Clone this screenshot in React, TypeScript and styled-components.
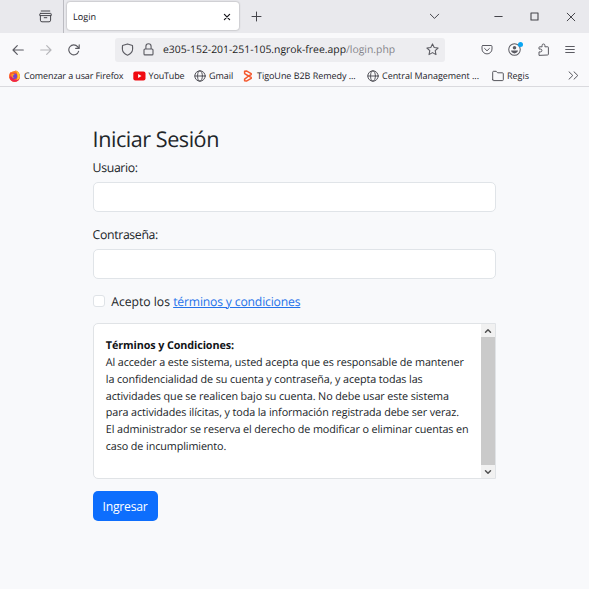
import React from 'react';
import styled, { createGlobalStyle } from 'styled-components';

const Global = createGlobalStyle`
  *, *::before, *::after { box-sizing: border-box; }
  html, body { margin: 0; height: 100%; overflow: hidden; background: #f8f9fb; }
  body {
    font-family: "Open Sans", "Noto Sans", sans-serif;
    color: #212529;
    text-rendering: geometricPrecision;
  }
  svg { display: block; flex: none; }
`;

const Window = styled.div`
  width: 589px;
  height: 589px;
  display: flex;
  flex-direction: column;
  overflow: hidden;
`;

const TabStrip = styled.header`
  display: flex;
  height: 33px;
  flex: none;
  background: #e9e9ed;
  color: #45454b;
`;

const ViewButton = styled.div`
  display: flex;
  justify-content: flex-end;
  width: 64px;
  padding: 10px 11px 0 0;
  border-right: 1px solid #bcbcc2;
`;

const Tab = styled.div`
  display: flex;
  align-items: center;
  justify-content: space-between;
  width: 172px;
  height: 28px;
  margin: 2px 0 0 3px;
  padding: 1px 8px 0 6px;
  border-radius: 3px;
  background: #fff;
  box-shadow: 0 0 2px rgba(0, 0, 0, 0.4);
  font-size: 9.1px;
  letter-spacing: 0.04px;
  color: #15141a;
`;

const NewTab = styled.div`
  padding: 11px 0 0 12px;
`;

const WindowControls = styled.div`
  display: flex;
  align-items: center;
  margin-left: auto;
  padding-right: 13px;
`;

const Control = styled.div<{ $gap: number }>`
  margin-right: ${(p) => p.$gap}px;
`;

const Toolbar = styled.nav`
  display: flex;
  align-items: center;
  height: 33px;
  flex: none;
  padding: 0 14px 0 12px;
  background: #f9f9fb;
  color: #5b5b62;
`;

const NavButtons = styled.div`
  display: flex;
  gap: 16px;
  width: 103px;
`;

const NavIcon = styled.div<{ $faded?: boolean }>`
  opacity: ${(p) => (p.$faded ? 0.42 : 1)};
`;

const AddressBar = styled.div`
  display: flex;
  align-items: center;
  width: 330px;
  height: 24px;
  padding: 0 6px 0 6px;
  border-radius: 3px;
  background: #ededf0;
`;

const Url = styled.div`
  margin: 1px auto 0 9px;
  font-size: 10.4px;
  letter-spacing: 0;
  line-height: 14px;
  white-space: nowrap;
  color: #1c1b22;
`;

const UrlPath = styled.span`
  color: #85858b;
`;

const Lock = styled.div`
  margin-left: 9px;
`;

const ToolIcons = styled.div`
  display: flex;
  align-items: center;
  gap: 15.5px;
  margin-left: auto;
`;

const Account = styled.div`
  position: relative;
`;

const Dot = styled.span`
  position: absolute;
  top: -1px;
  right: -2px;
  width: 5px;
  height: 5px;
  border-radius: 50%;
  background: #0aa5f2;
`;

const BookmarksBar = styled.nav`
  display: flex;
  align-items: center;
  height: 21px;
  flex: none;
  padding: 0 10px 1px 8px;
  background: #f9f9fb;
  border-bottom: 1px solid #dadade;
  color: #55555c;
`;

const Bookmark = styled.div<{ $width: number }>`
  display: flex;
  align-items: center;
  gap: 3px;
  width: ${(p) => p.$width}px;
`;

const BookmarkName = styled.span<{ $spacing: number }>`
  font-size: 9px;
  letter-spacing: ${(p) => p.$spacing}px;
  line-height: 13px;
  white-space: nowrap;
  color: #24232a;
`;

const Overflow = styled.div`
  margin-left: auto;
`;

const Page = styled.main`
  flex: 1;
  padding: 39px 93px 0 92.6px;
  background: #f8f9fb;
`;

const Title = styled.h1`
  margin: 0;
  height: 27px;
  font-size: 21.6px;
  font-weight: 400;
  letter-spacing: -0.47px;
  line-height: 28px;
`;

const Field = styled.div`
  height: 67px;
`;

const Label = styled.label`
  display: block;
  height: 29px;
  padding-top: 5px;
  font-size: 12.3px;
  letter-spacing: -0.36px;
  line-height: 19px;
`;

const Input = styled.input`
  display: block;
  width: 403px;
  height: 30px;
  margin: 0;
  padding: 0 10px;
  border: 1px solid #e0e4e8;
  border-radius: 5px;
  outline: none;
  background: #fff;
`;

const Consent = styled.div`
  display: flex;
  align-items: center;
  height: 20px;
  margin-top: 4px;
  font-size: 12.2px;
  line-height: 18px;
  letter-spacing: -0.01px;
  white-space: pre;
`;

const Checkbox = styled.input`
  appearance: none;
  width: 12.6px;
  height: 12.6px;
  margin: 0 6px 0 0;
  border: 1px solid #dfe3e7;
  border-radius: 3px;
  background: #fff;
`;

const ConsentText = styled.span`
  padding-top: 2px;
`;

const TermsLink = styled.a`
  color: #2472ea;
  letter-spacing: -0.18px;
  text-decoration: underline;
  text-decoration-thickness: 1px;
  text-underline-offset: 1px;
`;

const TermsBox = styled.section`
  display: flex;
  width: 403px;
  height: 156px;
  margin-top: 12px;
  border: 1px solid #e0e3e6;
  border-radius: 5px 0 0 5px;
  background: #fff;
`;

const TermsText = styled.div`
  flex: 1;
  padding: 14px 0 0 12.2px;
  font-size: 10.8px;
  letter-spacing: -0.105px;
  line-height: 16.85px;
  white-space: nowrap;
`;

const TermsHeading = styled.strong`
  display: block;
  font-weight: 700;
  color: #111417;
`;

const Scrollbar = styled.div`
  display: flex;
  flex-direction: column;
  width: 14px;
  background: #f1f1f1;
  color: #505050;
`;

const ScrollArrow = styled.div`
  display: grid;
  place-items: center;
  height: 13px;
`;

const ScrollThumb = styled.div`
  flex: 1;
  background: #cacaca;
`;

const Submit = styled.button`
  display: block;
  width: 65px;
  height: 30px;
  margin: 12px 0 0;
  padding: 2px 0 0;
  border: 0;
  border-radius: 5px;
  background: #0d6efd;
  color: #fff;
  font-family: inherit;
  font-size: 12.2px;
  letter-spacing: -0.23px;
  line-height: 28px;
`;

type IconProps = {
  w?: number;
  h?: number;
  box?: string;
  stroke?: number;
  children: React.ReactNode;
};

const Icon = ({ w = 12, h = w, box, stroke = 1, children }: IconProps) => (
  <svg
    width={w}
    height={h}
    viewBox={box ?? `0 0 ${w} ${h}`}
    fill="none"
    stroke="currentColor"
    strokeWidth={stroke}
    strokeLinecap="round"
    strokeLinejoin="round"
  >
    {children}
  </svg>
);

const Globe = () => (
  <Icon w={12}>
    <circle cx="6" cy="6" r="5.2" />
    <ellipse cx="6" cy="6" rx="2.4" ry="5.2" />
    <path d="M.8 6h10.4" />
  </Icon>
);

const Firefox = () => (
  <svg width="13" height="12" viewBox="0 0 13 12">
    <circle cx="6.5" cy="6.4" r="5.3" fill="#ff7a1c" />
    <path d="M1.2 5.5Q1.4 3 3 1.8L4 3.2Q6 2 8 3.4L7.4.2Q12 2 12 6.5 11.5 11.8 6.5 11.9 1.5 11.5 1.2 5.5Z" fill="#ff5a28" />
    <path d="M7.4.2Q11.8 2.2 12 6.4 11 10 8.5 10 11 5.5 7.4.2Z" fill="#ffc72e" />
    <path d="M1.4 7Q2.5 11.8 7 11.8 10 11.7 11.4 9 6 12 3.4 6Z" fill="#ed2450" />
    <circle cx="6.5" cy="6.2" r="2.7" fill="#7543cc" />
    <path d="M3.3 4.2Q5 3.2 6.7 4.6L4.8 5.8Q4.7 7.5 6.5 8 4 8.6 3.3 6Z" fill="#ff9822" />
  </svg>
);

const YouTube = () => (
  <svg width="13" height="10" viewBox="0 0 13 10">
    <rect x=".3" y=".4" width="12.2" height="9" rx="2" fill="#f00910" />
    <path d="M5.1 2.9v4L8.5 4.9Z" fill="#fff" />
  </svg>
);

const Remedy = () => (
  <svg width="11" height="12" viewBox="0 0 11 12" fill="none" stroke="#f4592f" strokeWidth="1.5" strokeLinejoin="round">
    <path d="M1.6 1.2L3.4.9 8.2 3.6v1L5.6 6l2.6 1.4v1L3.4 11.1 1.6 10.8V9.2L5.6 6 1.6 3.6Z" />
  </svg>
);

const Folder = () => (
  <Icon w={12} h={12}>
    <path d="M.7 9.7V2.2q0-.9.9-.9h2.6l1.4 1.5h4.8q.9 0 .9.9v6q0 .9-.9.9H1.6q-.9 0-.9-.9Z" />
  </Icon>
);

const TERMS = [
  'Al acceder a este sistema, usted acepta que es responsable de mantener',
  'la confidencialidad de su cuenta y contraseña, y acepta todas las',
  'actividades que se realicen bajo su cuenta. No debe usar este sistema',
  'para actividades ilícitas, y toda la información registrada debe ser veraz.',
  'El administrador se reserva el derecho de modificar o eliminar cuentas en',
  'caso de incumplimiento.',
];

const BOOKMARKS = [
  { name: 'Comenzar a usar Firefox', width: 124.5, spacing: -0.12, icon: <Firefox /> },
  { name: 'YouTube', width: 61.5, spacing: -0.14, icon: <YouTube /> },
  { name: 'Gmail', width: 49, spacing: -0.05, icon: <Globe /> },
  { name: 'TigoUne B2B Remedy ...', width: 124, spacing: -0.04, icon: <Remedy /> },
  { name: 'Central Management ...', width: 125, spacing: -0.04, icon: <Globe /> },
  { name: 'Regis', width: 45, spacing: -0.02, icon: <Folder /> },
];

export default function App() {
  return (
    <>
      <Global />
      <Window>
        <TabStrip>
          <ViewButton>
            <Icon w={13} h={13}>
              <path d="M2.2 1h8.6M1.4 3.4h10.2q.6 0 .6.6v1.6H.8V4q0-.6.6-.6ZM1.4 5.6v4.6q0 1.6 1.6 1.6h7q1.6 0 1.6-1.6V5.6M5.2 7.7h2.6" />
            </Icon>
          </ViewButton>
          <Tab>
            Login
            <Icon w={8} stroke={1.2}>
              <path d="M1.4 1.4l5.2 5.2M6.6 1.4L1.4 6.6" />
            </Icon>
          </Tab>
          <NewTab>
            <Icon w={11}>
              <path d="M5.5 1v9M1 5.5h9" />
            </Icon>
          </NewTab>
          <WindowControls>
            <Control $gap={54}>
              <Icon w={11} h={7}>
                <path d="M1.3 1.2l4.2 4.2 4.2-4.2" />
              </Icon>
            </Control>
            <Control $gap={27}>
              <Icon w={9} h={3}>
                <path d="M.8 1.5h7.4" />
              </Icon>
            </Control>
            <Control $gap={27}>
              <Icon w={9} h={9} stroke={1.1}>
                <path d="M1 1h7v7H1Z" />
              </Icon>
            </Control>
            <Control $gap={0}>
              <Icon w={10}>
                <path d="M1.2 1.2l7.6 7.6M8.8 1.2L1.2 8.8" />
              </Icon>
            </Control>
          </WindowControls>
        </TabStrip>

        <Toolbar>
          <NavButtons>
            <NavIcon>
              <Icon w={12} stroke={1.15}>
                <path d="M11.3 6H1M5.3 1.6L1 6l4.3 4.4" />
              </Icon>
            </NavIcon>
            <NavIcon $faded>
              <Icon w={12} stroke={1.15}>
                <path d="M.7 6H11M6.7 1.6L11 6l-4.3 4.4" />
              </Icon>
            </NavIcon>
            <NavIcon>
              <Icon w={12} stroke={1.15}>
                <path d="M10.6 7.3A5 5 0 1 1 9.6 2.6l1.2 1.5M11.2.9v3.5H7.7" />
              </Icon>
            </NavIcon>
          </NavButtons>
          <AddressBar>
            <Icon w={13} stroke={1.1}>
              <path d="M6.5.9l5 1.7q.6 4.7-1 6.8-1.5 2-4 2.9-2.5-.9-4-2.9-1.6-2.1-1-6.8Z" />
            </Icon>
            <Lock>
              <Icon w={11} h={13} stroke={1.1}>
                <path d="M2.9 6V3.4a2.6 2.6 0 0 1 5.2 0V6M2 6h7q1 0 1 1v3.9q0 1-1 1H2q-1 0-1-1V7q0-1 1-1Z" />
              </Icon>
            </Lock>
            <Url>
              e305-152-201-251-105.ngrok-free.app<UrlPath>/login.php</UrlPath>
            </Url>
            <Icon w={13} stroke={1.05}>
              <path d="M6.5.9l1.7 3.6 3.9.5-2.9 2.7.8 3.9-3.5-2-3.5 2 .8-3.9L.9 5l3.9-.5Z" />
            </Icon>
          </AddressBar>
          <ToolIcons>
            <Icon w={12} h={12}>
              <path d="M2 1.5h8q1 0 1 1v2.5a5 4.9 0 0 1-10 0V2.5q0-1 1-1ZM3.6 4.5L6 6.8l2.4-2.3" />
            </Icon>
            <Account>
              <Icon w={13} box="0 0 14 14" stroke={1.1}>
                <circle cx="7" cy="7" r="6.2" />
                <circle cx="7" cy="5.2" r="1.9" fill="currentColor" stroke="none" />
                <path d="M3.2 8.2h7.6q-.8 3-3.8 3t-3.8-3Z" fill="currentColor" stroke="none" />
              </Icon>
              <Dot />
            </Account>
            <Icon w={13}>
              <path d="M2 12V8.9h1.5a1.4 1.4 0 0 0 0-2.8H2V4.4q0-.6.6-.6h2.5V2.4a1.4 1.4 0 0 1 2.8 0v1.4h2.9q.6 0 .6.6v7q0 .6-.6.6Z" />
            </Icon>
            <Icon w={10} h={10}>
              <path d="M.7 1.5h8.6M.7 4.5h8.6M.7 7.5h8.6" />
            </Icon>
          </ToolIcons>
        </Toolbar>

        <BookmarksBar>
          {BOOKMARKS.map((b) => (
            <Bookmark key={b.name} $width={b.width}>
              {b.icon}
              <BookmarkName $spacing={b.spacing}>{b.name}</BookmarkName>
            </Bookmark>
          ))}
          <Overflow>
            <Icon w={11} h={9}>
              <path d="M1 .8l3.8 3.7L1 8.2M6 .8l3.8 3.7L6 8.2" />
            </Icon>
          </Overflow>
        </BookmarksBar>

        <Page>
          <Title>Iniciar Sesión</Title>
          <Field>
            <Label htmlFor="user">Usuario:</Label>
            <Input id="user" type="text" />
          </Field>
          <Field>
            <Label htmlFor="password">Contraseña:</Label>
            <Input id="password" type="password" />
          </Field>
          <Consent>
            <Checkbox id="accept" type="checkbox" />
            <ConsentText>
              <label htmlFor="accept">Acepto los </label>
              <TermsLink href="#terms">términos y condiciones</TermsLink>
            </ConsentText>
          </Consent>
          <TermsBox id="terms">
            <TermsText>
              <TermsHeading>Términos y Condiciones:</TermsHeading>
              {TERMS.map((line) => (
                <div key={line}>{line}</div>
              ))}
            </TermsText>
            <Scrollbar>
              <ScrollArrow>
                <Icon w={8} h={6} stroke={1.5}>
                  <path d="M1.5 4.2L4 1.8l2.5 2.4" />
                </Icon>
              </ScrollArrow>
              <ScrollThumb />
              <ScrollArrow>
                <Icon w={8} h={6} stroke={1.5}>
                  <path d="M1.5 1.8L4 4.2l2.5-2.4" />
                </Icon>
              </ScrollArrow>
            </Scrollbar>
          </TermsBox>
          <Submit type="button">Ingresar</Submit>
        </Page>
      </Window>
    </>
  );
}
